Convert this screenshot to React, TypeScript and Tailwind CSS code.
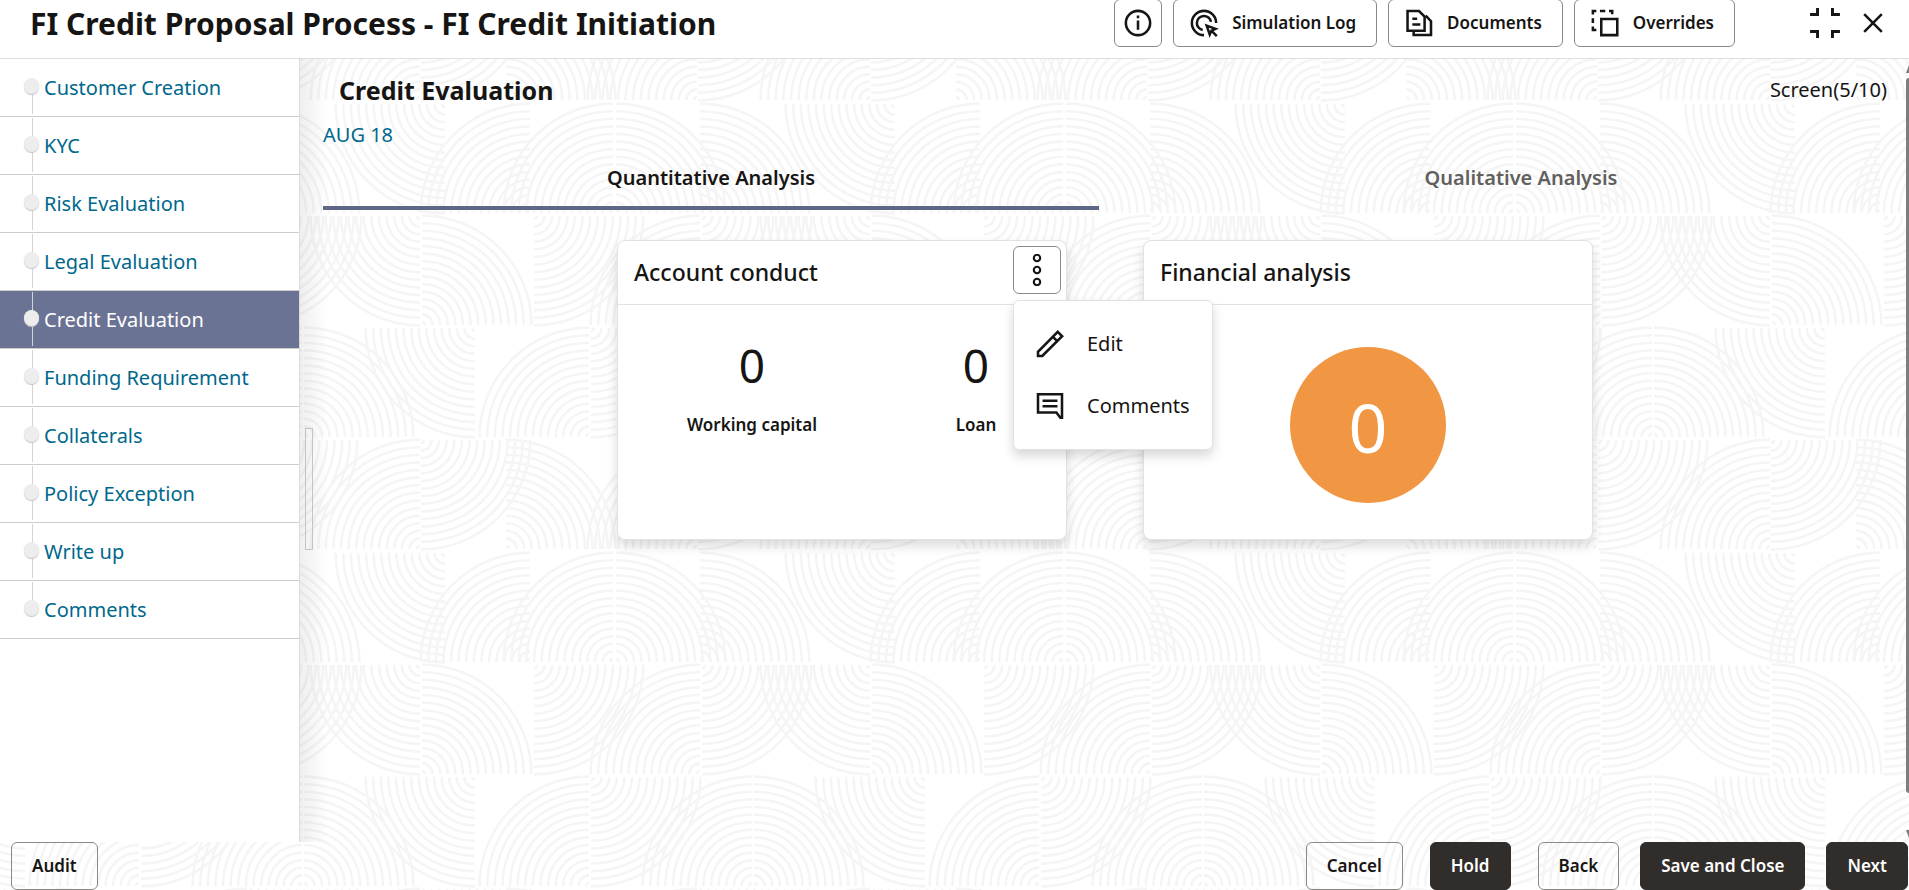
import type { ReactNode } from "react";

const STEPS = [
  "Customer Creation",
  "KYC",
  "Risk Evaluation",
  "Legal Evaluation",
  "Credit Evaluation",
  "Funding Requirement",
  "Collaterals",
  "Policy Exception",
  "Write up",
  "Comments",
];

const ACTIVE_STEP = "Credit Evaluation";

// Quarter-circle fans of the page texture: row, centre x, centre edge, direction
type Fan = [row: number, cx: number, edge: "top" | "bottom", dir: 1 | -1];

const TILE_W = 450;
const TILE_H = 449;
const ROW_H = 112;

const FANS: Fan[] = [
  [0, 445, "top", -1],
  [0, 530, "bottom", -1],
  [0, 613, "bottom", -1],
  [0, 616, "bottom", 1],
  [0, 700, "bottom", 1],
  [1, 420, "top", -1],
  [1, 422, "bottom", 1],
  [1, 534, "top", 1],
  [1, 700, "bottom", -1],
  [1, 702, "top", 1],
  [2, 304, "bottom", 1],
  [2, 475, "top", -1],
  [2, 589, "bottom", -1],
  [2, 591, "top", 1],
  [2, 752, "bottom", -1],
  [3, 420, "bottom", -1],
  [3, 421, "top", 1],
  [3, 506, "bottom", 1],
  [3, 697, "bottom", -1],
  [3, 698, "top", 1],
];

function fanPath([row, cx, edge, dir]: Fan, shift: number) {
  const x = cx + shift;
  const top = row * ROW_H;
  const cy = edge === "top" ? top + 2 : top + ROW_H - 1;
  const v = edge === "top" ? 1 : -1;
  const sweep = dir * v === 1 ? 1 : 0;
  let d = "";
  for (let i = 0; i < 15; i++) {
    const r = 3 + i * 7.6;
    d += `M${x + dir * r} ${cy}A${r} ${r} 0 0 ${sweep} ${x} ${cy + v * r}`;
  }
  return d;
}

function Texture() {
  return (
    <svg className="absolute inset-0 -z-10 h-full w-full" aria-hidden="true">
      <defs>
        <pattern id="arcs" width={TILE_W} height={TILE_H} y={102} patternUnits="userSpaceOnUse">
          {FANS.map((fan) =>
            [-900, -450, 0].map((shift) => (
              <path
                key={`${fan.join("-")}-${shift}`}
                d={fanPath(fan, shift)}
                fill="none"
                stroke="#f5f5f5"
                strokeWidth="2.6"
              />
            )),
          )}
        </pattern>
      </defs>
      <rect width="100%" height="100%" fill="url(#arcs)" />
    </svg>
  );
}

function Icon({ children, className = "size-8" }: { children: ReactNode; className?: string }) {
  return (
    <svg
      viewBox="0 0 24 24"
      className={`shrink-0 ${className}`}
      fill="none"
      stroke="currentColor"
      strokeWidth="1.9"
      aria-hidden="true"
    >
      {children}
    </svg>
  );
}

const InfoIcon = () => (
  <Icon>
    <circle cx="12" cy="12" r="9.1" />
    <path d="M12 10.2v6.8M12 6.4v2" />
  </Icon>
);

const SimulationIcon = () => (
  <Icon>
    <path d="M21.1 12A9.1 9.1 0 1 0 12 21.1" />
    <path d="M17.2 11.2A5.3 5.3 0 1 0 11 17.2" />
    <path d="M14 14l6.6 2.4-3 1.3-1.3 3zM17.4 17.6l4.2 4.2" />
  </Icon>
);

const DocumentsIcon = () => (
  <Icon>
    <path d="M3.4 3h8.6l4.2 4.2v10.6H3.4zM7 8.8h3.6M7 13.2h6" />
    <path d="M17 6.4l4 4.2V21H8v-3" />
  </Icon>
);

const OverridesIcon = () => (
  <Icon>
    <path d="M9.2 9h12v12.1h-12z" />
    <path d="M2.9 5.6V3h2.6M8.2 3h4M15 3h2.4v2.4M2.9 8.4v3.6M2.9 14.6v2.6h2.6" />
  </Icon>
);

const CollapseIcon = () => (
  <Icon>
    <path d="M6.4 .8v4.8H.8M17.6 .8v4.8h5.6M6.4 23.2v-4.8H.8M17.6 23.2v-4.8h5.6" strokeWidth="2.2" />
  </Icon>
);

const CloseIcon = () => (
  <Icon>
    <path d="M5.4 5.4l13.2 13.2M18.6 5.4L5.4 18.6" />
  </Icon>
);

const KebabIcon = () => (
  <Icon>
    <circle cx="12" cy="3" r="2.4" strokeWidth="1.6" />
    <circle cx="12" cy="12" r="2.4" strokeWidth="1.6" />
    <circle cx="12" cy="21" r="2.4" strokeWidth="1.6" />
  </Icon>
);

const EditIcon = () => (
  <Icon>
    <path d="M3 21v-3.2L17.8 2.9l3.3 3.3L6.2 21zM14.2 6.6l3.2 3.2" />
  </Icon>
);

const CommentsIcon = () => (
  <Icon>
    <path d="M3 3.2h18v17.6h-1.2l-3-4H3zM6.4 8h11.2M6.4 12.2h11.2" />
  </Icon>
);

function HeaderButton({ icon, label }: { icon: ReactNode; label: string }) {
  return (
    <button
      type="button"
      className="flex h-12 items-center gap-3 rounded-md border border-[#8b8985] bg-white pr-5 pl-3.5 text-[17px] font-semibold"
    >
      {icon}
      {label}
    </button>
  );
}

function Header() {
  return (
    <header className="flex h-[59px] shrink-0 items-start justify-between border-b border-[#dedede] bg-white pr-5 pl-[30px]">
      <h1 className="text-[30px] leading-12 font-bold whitespace-nowrap">
        FI Credit Proposal Process - FI Credit Initiation
      </h1>
      <div className="-mt-px flex items-center">
        <div className="flex gap-[11px]">
          <button
            type="button"
            aria-label="Information"
            className="flex size-12 items-center justify-center rounded-md border border-[#8b8985] bg-white"
          >
            <InfoIcon />
          </button>
          <HeaderButton icon={<SimulationIcon />} label="Simulation Log" />
          <HeaderButton icon={<DocumentsIcon />} label="Documents" />
          <HeaderButton icon={<OverridesIcon />} label="Overrides" />
        </div>
        <button type="button" aria-label="Exit full screen" className="ml-[74px]">
          <CollapseIcon />
        </button>
        <button type="button" aria-label="Close" className="ml-4">
          <CloseIcon />
        </button>
      </div>
    </header>
  );
}

function StepLink({ label, first, last }: { label: string; first: boolean; last: boolean }) {
  const active = label === ACTIVE_STEP;
  return (
    <li className={`border-b border-[#cfcdc9] ${active ? "bg-[#6b7394] text-white" : "text-[#00688c]"}`}>
      <a
        href="#"
        aria-current={active ? "step" : undefined}
        className="flex h-[57px] items-center gap-[5px] pl-6 text-xl"
      >
        <span className="relative flex h-full w-[15px] items-center justify-center">
          <span
            className={`absolute left-2 w-px bg-[#d4d4d4] ${first ? "top-6" : "top-px"} ${last ? "bottom-6" : "bottom-[2px]"}`}
          />
          <span className="relative mb-1 h-4 w-[15px] rounded-full bg-[#ededed] shadow-[0_1px_1px_#c4c4c4]" />
        </span>
        {label}
      </a>
    </li>
  );
}

function Sidebar() {
  return (
    <nav className="w-[300px] shrink-0 border-r border-[#dcdcdc] bg-white" aria-label="Process steps">
      <ul>
        {STEPS.map((step, i) => (
          <StepLink key={step} label={step} first={i === 0} last={i === STEPS.length - 1} />
        ))}
      </ul>
    </nav>
  );
}

function Card({ title, action, children }: { title: string; action?: ReactNode; children: ReactNode }) {
  return (
    <section className="h-[300px] w-[450px] rounded-lg border border-[#e2e2e2] bg-white shadow-[0_6px_12px_rgba(0,0,0,0.14)]">
      <div className="flex h-16 items-center justify-between border-b border-[#e2e2e2] pr-[5px] pl-4">
        <h3 className="text-[23px] font-medium">{title}</h3>
        {action}
      </div>
      {children}
    </section>
  );
}

function CardMenu() {
  return (
    <div className="relative -mt-1.5">
      <button
        type="button"
        aria-label="More actions"
        aria-expanded="true"
        className="flex size-12 items-center justify-center rounded-md border border-[#8b8985] bg-white"
      >
        <KebabIcon />
      </button>
      <div
        role="menu"
        className="absolute top-[54px] left-0 z-10 w-[200px] rounded-md border border-[#e2e2e2] bg-white py-3 shadow-[0_6px_12px_rgba(0,0,0,0.16)]"
      >
        <button type="button" role="menuitem" className="flex h-[62px] w-full items-center gap-[21px] pl-5 text-xl">
          <EditIcon />
          Edit
        </button>
        <button type="button" role="menuitem" className="flex h-[62px] w-full items-center gap-[21px] pl-5 text-xl">
          <CommentsIcon />
          Comments
        </button>
      </div>
    </div>
  );
}

function Figure({ value, label }: { value: string; label: string }) {
  return (
    <div className="text-center">
      <div className="text-[46px] leading-[56px]">{value}</div>
      <div className="mt-4 text-[17px] leading-8 font-semibold">{label}</div>
    </div>
  );
}

function Workspace() {
  return (
    <main className="min-w-0 flex-1 bg-linear-to-r from-[#00000010] to-transparent to-[28px] pl-[23px]">
      <div className="flex h-[62px] items-center justify-between pr-[22px] pl-4">
        <h2 className="text-[25px] leading-8 font-bold">Credit Evaluation</h2>
        <span className="text-xl">Screen(5/10)</span>
      </div>
      <a href="#" className="block w-fit text-xl leading-7 text-[#00688c]">
        AUG 18
      </a>
      <div role="tablist" className="grid grid-cols-2 gap-[34px] text-xl font-semibold">
        <button type="button" role="tab" aria-selected="true" className="h-[61px] border-b-4 border-[#5f6789]">
          Quantitative Analysis
        </button>
        <button
          type="button"
          role="tab"
          aria-selected="false"
          className="h-[61px] border-b-4 border-transparent text-[#62605d]"
        >
          Qualitative Analysis
        </button>
      </div>
      <div className="mt-[30px] flex justify-center gap-[76px] pr-[22px]">
        <Card title="Account conduct" action={<CardMenu />}>
          <div className="grid grid-cols-[224px_224px] pt-8 pl-[22px]">
            <Figure value="0" label="Working capital" />
            <Figure value="0" label="Loan" />
          </div>
        </Card>
        <Card title="Financial analysis">
          <div className="mx-auto mt-[42px] flex size-[156px] items-center justify-center rounded-full bg-[#f19743] pt-1 text-[68px] text-white">
            0
          </div>
        </Card>
      </div>
    </main>
  );
}

function Splitter() {
  return <div className="absolute top-[369px] left-[305px] h-[122px] w-2 border border-[#c4c4c4]" />;
}

function Scrollbar() {
  return (
    <div className="absolute inset-y-0 right-0 w-[3px] pt-[19px] pb-[49px]" aria-hidden="true">
      <div className="h-full rounded-l-sm bg-[#7d7d7d]" />
      <svg className="absolute top-1.5 right-0 h-2 w-[3px]" viewBox="0 0 3 8">
        <path d="M3 0v8H0z" fill="#7d7d7d" />
      </svg>
      <svg className="absolute right-0 bottom-1 h-2 w-[3px]" viewBox="0 0 3 8">
        <path d="M0 0h3v8z" fill="#7d7d7d" />
      </svg>
    </div>
  );
}

const OUTLINE = "h-12 rounded-md border border-[#8b8985] px-5 text-[17px] font-semibold";
const SOLID = "h-12 rounded-md border border-[#312d2a] bg-[#312d2a] px-5 text-[17px] font-semibold text-white";

function Footer() {
  return (
    <footer className="flex h-12 shrink-0 items-center justify-between pr-px pl-[11px]">
      <button type="button" className={OUTLINE}>
        Audit
      </button>
      <div className="flex gap-[27px]">
        <button type="button" className={OUTLINE}>
          Cancel
        </button>
        <button type="button" className={SOLID}>
          Hold
        </button>
        <div className="flex gap-[21px]">
          <button type="button" className={OUTLINE}>
            Back
          </button>
          <button type="button" className={SOLID}>
            Save and Close
          </button>
          <button type="button" className={SOLID}>
            Next
          </button>
        </div>
      </div>
    </footer>
  );
}

export default function App() {
  return (
    <div className="relative isolate flex min-h-screen flex-col bg-white font-['Noto_Sans',sans-serif] text-[#161513]">
      <Texture />
      <Header />
      <div className="relative flex flex-1">
        <Sidebar />
        <Workspace />
        <Splitter />
        <Scrollbar />
      </div>
      <Footer />
    </div>
  );
}
